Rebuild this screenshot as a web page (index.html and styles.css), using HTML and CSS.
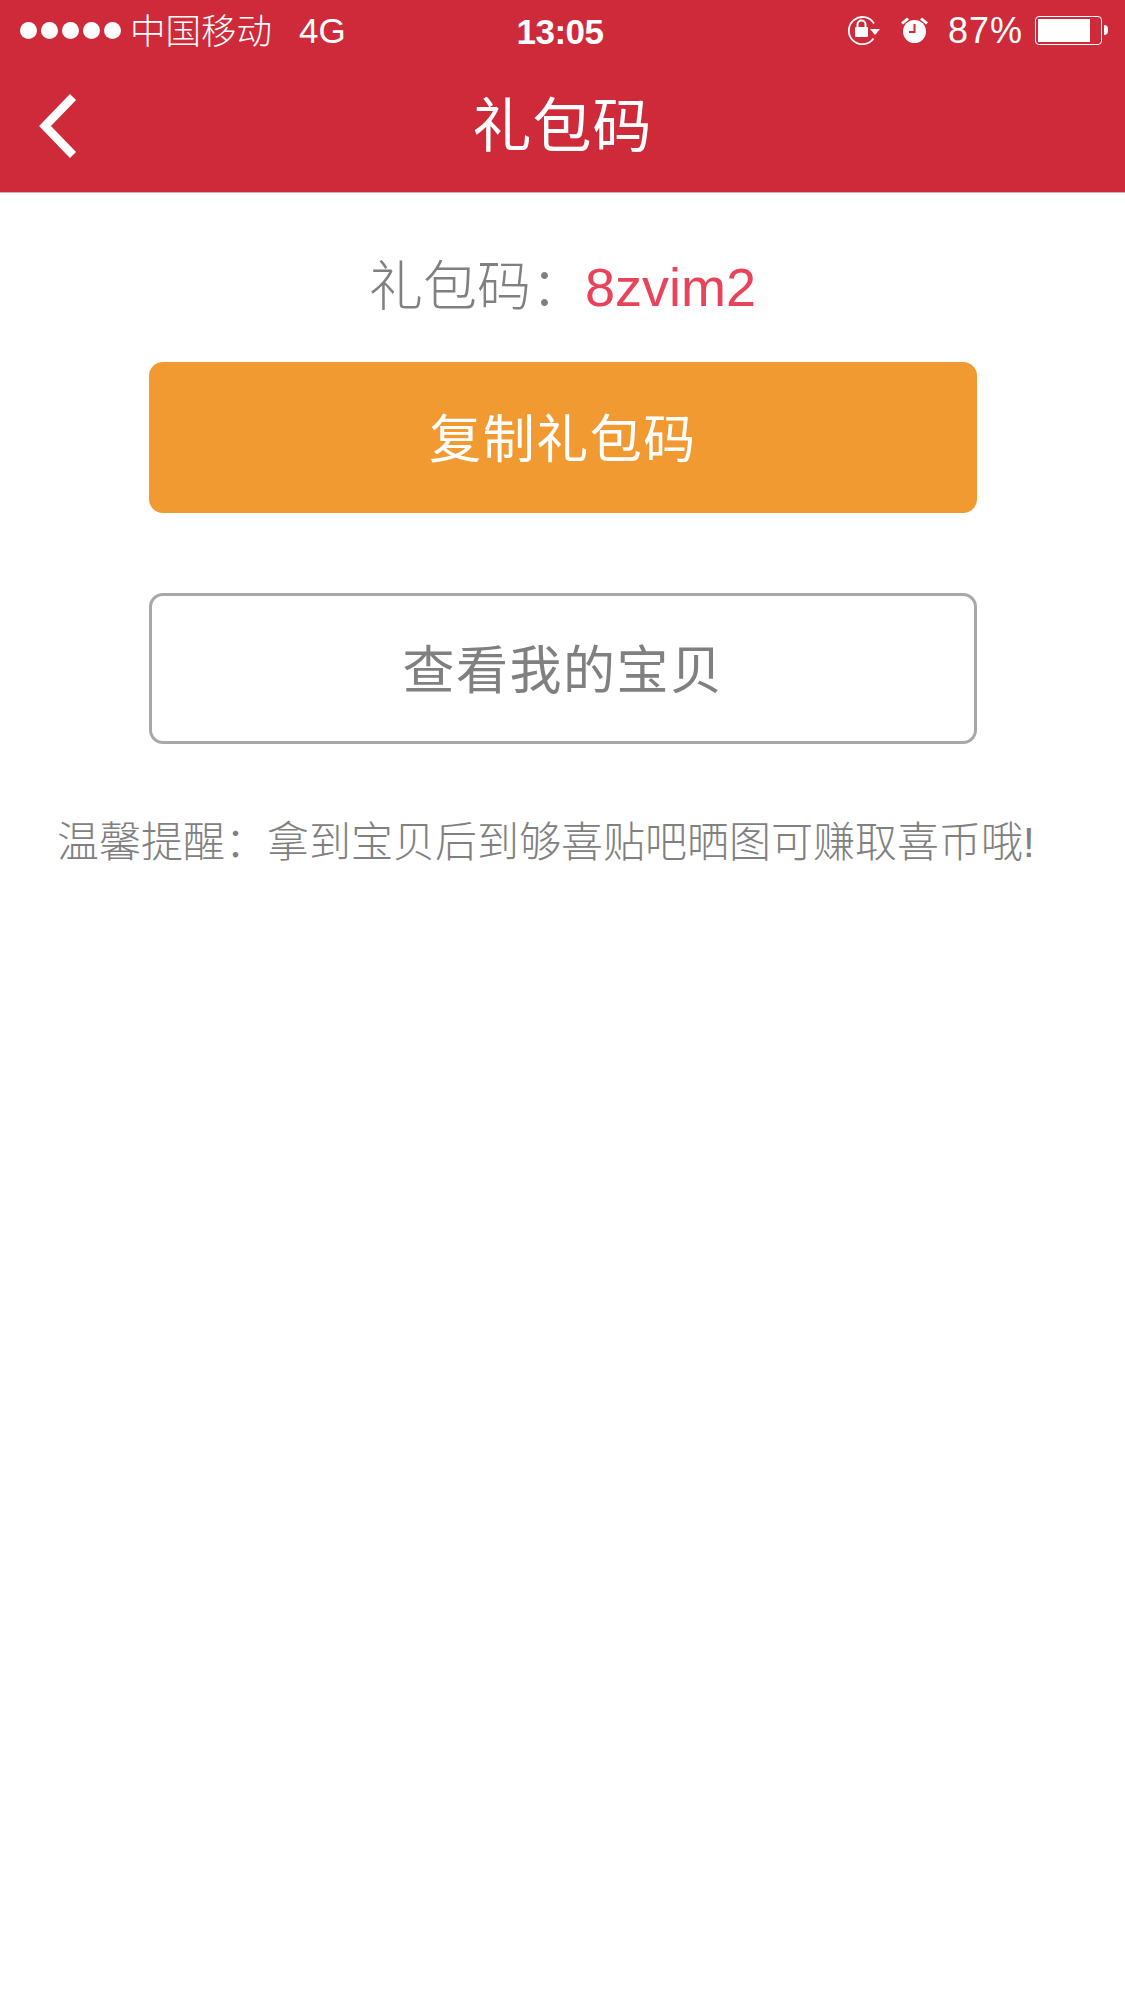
FILE: index.html
```html
<!DOCTYPE html>
<html lang="zh-CN">
<head>
  <meta charset="UTF-8">
  <title>礼包码</title>
  <link rel="stylesheet" href="styles.css">
</head>
<body>
  <header class="header">
    <!-- 状态栏 -->
    <div class="status">
      <div class="status-left">
        <div class="signal">
          <i></i><i></i><i></i><i></i><i></i>
        </div>
        <span class="carrier">中国移动</span>
        <span class="network">4G</span>
      </div>
      <div class="clock">13:05</div>
      <div class="status-right">
        <svg class="icon-lock" viewBox="0 0 34 30" width="34" height="30">
          <path d="M27.500 23.500A13.600 13.600 0 1 1 28 8.500" fill="none" stroke="#fff" stroke-width="1.800"/>
          <path d="M24 14h10l-5 6z" fill="#fff"/>
          <rect x="9" y="12" width="13" height="10" rx="1" fill="#fff"/>
          <path d="M11.500 12V9.500a4 4 0 0 1 8 0V12" fill="none" stroke="#fff" stroke-width="2"/>
        </svg>
        <svg class="icon-alarm" viewBox="0 0 30 30" width="30" height="30">
          <circle cx="14.500" cy="16.500" r="11.500" fill="#fff"/>
          <path d="M1 7.500L7 2.500L9 4.500L3 9.500zM28 7.500L22 2.500L20 4.500L26 9.500z" fill="#fff"/>
          <path d="M14.500 9V17H9" fill="none" stroke="#cf2a3a" stroke-width="2"/>
        </svg>
        <span class="percent">87%</span>
        <div class="battery"><div class="battery-level"></div></div>
        <div class="battery-tip"></div>
      </div>
    </div>
    <!-- 导航栏 -->
    <div class="nav">
      <svg class="back" viewBox="0 0 38 64" width="38" height="64">
        <path d="M34 3L6 32L34 61" fill="none" stroke="#fff" stroke-width="8.500"/>
      </svg>
      <h1 class="title">礼包码</h1>
    </div>
  </header>

  <main class="content">
    <p class="code-line">礼包码：<span class="code">8zvim2</span></p>
    <button class="btn btn-copy">复制礼包码</button>
    <button class="btn btn-view">查看我的宝贝</button>
    <p class="tip">温馨提醒：拿到宝贝后到够喜贴吧晒图可赚取喜币哦!</p>
  </main>
</body>
</html>
```

FILE: styles.css
```css
body {
  margin: 0;
  background: #fff;
  font-family: "Liberation Sans", "Noto Sans CJK SC", sans-serif;
  color: #808080;
}

/* 顶部 */
.header {
  background: #cf2a3a;
  color: #fff;
  height: 193px;
  border-bottom: 1px solid #c9b4b6;
  box-sizing: border-box;
}
.status {
  display: grid;
  grid-template-columns: 1fr auto 1fr;
  align-items: center;
  height: 60px;
  padding: 0 17px 0 20px;
}
.status-left, .status-right {
  display: flex;
  align-items: center;
}
.status-right {
  justify-content: flex-end;
}
.signal {
  display: flex;
  gap: 4px;
}
.signal i {
  width: 17px;
  height: 17px;
  border-radius: 50%;
  background: #fff;
}
.carrier {
  margin: 0 0 3px 9px;
  font-size: 35.500px;
  font-weight: 300;
}
.network {
  margin-left: 27px;
  margin-top: 2px;
  font-size: 35px;
}
.clock {
  margin: 3px 8px 0 0;
  font-size: 35px;
  font-weight: 700;
  letter-spacing: -0.5px;
}
.icon-alarm {
  margin-left: 20px;
}
.percent {
  margin-left: 18px;
  margin-top: 2px;
  font-size: 36px;
  letter-spacing: 1px;
}
.battery {
  margin-left: 12px;
  width: 67px;
  height: 29px;
  box-sizing: border-box;
  border: 1px solid #fff;
  border-radius: 4px;
  padding: 2px;
}
.battery-level {
  width: 86%;
  height: 100%;
  background: #fff;
}
.battery-tip {
  width: 4px;
  height: 10px;
  margin-left: 2px;
  background: #fff;
  border-radius: 0 4px 4px 0;
}
.nav {
  position: relative;
  display: flex;
  align-items: center;
  justify-content: center;
  height: 132px;
  padding-bottom: 10px;
  box-sizing: border-box;
}
.back {
  position: absolute;
  left: 39px;
  top: 34px;
}
.title {
  margin: 0;
  font-size: 59px;
  font-weight: 400;
  letter-spacing: 1px;
}

/* 内容 */
.content {
  display: flex;
  flex-direction: column;
  align-items: center;
}
.code-line {
  margin: 59px 0 0;
  font-size: 54px;
  line-height: 70px;
  font-weight: 300;
}
.code {
  color: #e8435a;
  font-weight: 400;
}
.btn {
  display: block;
  width: 828px;
  height: 151px;
  margin-left: 1px;
  padding-bottom: 6px;
  box-sizing: border-box;
  border-radius: 14px;
  font-family: inherit;
  font-size: 52px;
  font-weight: 400;
  letter-spacing: 1.500px;
}
.btn-copy {
  margin-top: 40px;
  border: none;
  background: #f29a32;
  color: #fff;
}
.btn-view {
  margin-top: 80px;
  border: 3px solid #a8a8a8;
  background: #fff;
  color: #808080;
}
.tip {
  align-self: flex-start;
  margin: 71px 0 0 57px;
  font-size: 42px;
  line-height: 56px;
  font-weight: 300;
}
```
